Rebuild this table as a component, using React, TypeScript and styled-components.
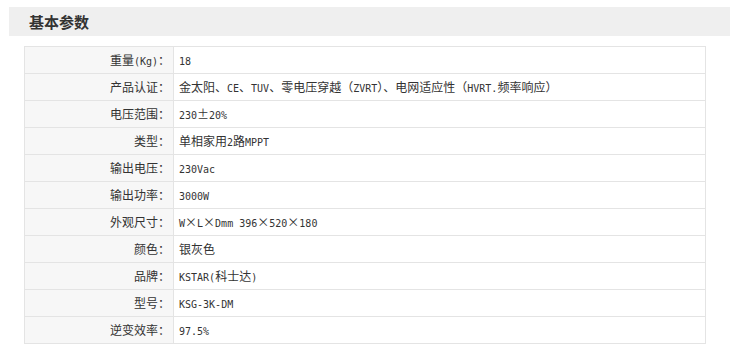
import React from "react";
import styled, { createGlobalStyle } from "styled-components";

const GlobalStyle = createGlobalStyle`
  html, body {
    margin: 0;
    padding: 0;
    background: #ffffff;
  }
  body {
    font-family: "Noto Sans CJK SC", "Noto Sans", sans-serif;
    color: #333333;
  }
`;

const Page = styled.div`
  padding: 7px 0 0 9px;
  display: flex;
  flex-direction: column;
`;

const SectionHeader = styled.div`
  height: 29px;
  background: #efefef;
  display: flex;
  align-items: center;
  padding-left: 20px;
`;

const SectionTitle = styled.h2`
  margin: 0;
  font-size: 15px;
  font-weight: bold;
  color: #333333;
  line-height: 1;
`;

const SpecTable = styled.table`
  margin: 10px 0 0 15px;
  width: 682px;
  border-collapse: collapse;
  border: 1px solid #e2e2e2;
  font-size: 12px;
`;

const Row = styled.tr`
  height: 27px;
`;

const LabelCell = styled.th`
  width: 149px;
  height: 26px;
  padding: 0 3px 0 0;
  background: #f7f7f7;
  border: 1px solid #e4e4e4;
  text-align: right;
  vertical-align: middle;
  font-weight: normal;
  color: #333333;
  white-space: nowrap;
  line-height: 14px;
  box-sizing: border-box;
`;

const ValueCell = styled.td`
  height: 26px;
  padding: 0 0 0 5px;
  border: 1px solid #e4e4e4;
  text-align: left;
  vertical-align: middle;
  color: #333333;
  white-space: nowrap;
  line-height: 14px;
`;

const Half = styled.span`
  font-family: "DejaVu Sans Mono", "Liberation Mono", monospace;
  font-size: 10px;
  line-height: 1;
`;

const mixed = (text: string) =>
  text.split(/([\x20-\x7E]+)/).map((part, i) =>
    /^[\x20-\x7E]+$/.test(part) ? <Half key={i}>{part}</Half> : part
  );

const specs: [string, string][] = [
  ["重量(Kg)：", "18"],
  ["产品认证：", "金太阳、CE、TUV、零电压穿越（ZVRT）、电网适应性（HVRT.频率响应）"],
  ["电压范围：", "230±20%"],
  ["类型：", "单相家用2路MPPT"],
  ["输出电压：", "230Vac"],
  ["输出功率：", "3000W"],
  ["外观尺寸：", "W×L×Dmm 396×520×180"],
  ["颜色：", "银灰色"],
  ["品牌：", "KSTAR(科士达)"],
  ["型号：", "KSG-3K-DM"],
  ["逆变效率：", "97.5%"],
];

export default function App() {
  return (
    <>
      <GlobalStyle />
      <Page>
        <SectionHeader>
          <SectionTitle>基本参数</SectionTitle>
        </SectionHeader>
        <SpecTable>
          <tbody>
            {specs.map(([label, value]) => (
              <Row key={label}>
                <LabelCell>{mixed(label)}</LabelCell>
                <ValueCell>{mixed(value)}</ValueCell>
              </Row>
            ))}
          </tbody>
        </SpecTable>
      </Page>
    </>
  );
}
